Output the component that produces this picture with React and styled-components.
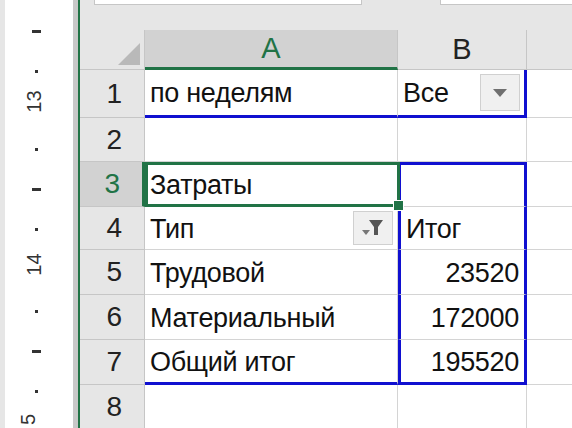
import styled, { createGlobalStyle } from "styled-components";

const Global = createGlobalStyle`
  html, body { margin: 0; padding: 0; overflow: hidden; }
  body { width: 572px; height: 428px; background: #e6e6e6; font-family: "Liberation Sans", Arial, sans-serif; }
`;

const Page = styled.div`
  display: flex;
  width: 572px;
  height: 428px;
  overflow: hidden;
`;

const Ruler = styled.div`
  position: relative;
  width: 68px;
  margin-left: 5px;
  background: #fff;
  flex-shrink: 0;
`;

const Gutter = styled.div`
  width: 5px;
  background: #c8c8c8;
  border-right: 2px solid #217346;
  flex-shrink: 0;
`;

const Mark = styled.div`
  position: absolute;
  left: ${p => (p.dot ? 30 : 27)}px;
  top: ${p => p.y}px;
  width: ${p => (p.dot ? 3 : 9)}px;
  height: 3px;
  background: #333;
`;

const RulerNum = styled.div`
  position: absolute;
  left: 18px;
  top: ${p => p.y}px;
  transform: rotate(-90deg);
  font-size: 20px;
  color: #333;
`;

const Sheet = styled.div`
  flex: 1;
  display: flex;
  flex-direction: column;
  position: relative;
`;

const TopBar = styled.div`
  height: 30px;
  flex-shrink: 0;
  position: relative;
  &::before, &::after {
    content: "";
    position: absolute;
    top: -4px;
    height: 7px;
    background: #fff;
    border: 1px solid #c6c6c6;
  }
  &::before { left: 14px; width: 266px; }
  &::after { left: 360px; width: 200px; }
`;

const Grid = styled.div`
  display: grid;
  grid-template-columns: 65px 253px 129px 60px;
  grid-template-rows: 40px 48px 44px 45px 43px 45px 45px 45px 44px;
  background: #fff;
`;

const Corner = styled.div`
  background: #e6e6e6;
  border-right: 1px solid #c6c6c6;
  border-bottom: 1px solid #c6c6c6;
  position: relative;
  &::after {
    content: "";
    position: absolute;
    right: 4px;
    bottom: 4px;
    border-left: 22px solid transparent;
    border-bottom: 22px solid #b9b9b9;
  }
`;

const ColHead = styled.div`
  background: ${p => (p.sel ? "#d2d2d2" : "#e6e6e6")};
  color: ${p => (p.sel ? "#217346" : "#222")};
  border-right: 1px solid #c6c6c6;
  border-bottom: ${p => (p.sel ? "3px solid #217346" : "1px solid #c6c6c6")};
  display: flex;
  align-items: center;
  justify-content: center;
  font-size: 29px;
`;

const RowHead = styled.div`
  background: ${p => (p.sel ? "#d2d2d2" : "#e6e6e6")};
  color: ${p => (p.sel ? "#217346" : "#222")};
  border-right: ${p => (p.sel ? "3px solid #217346" : "1px solid #c6c6c6")};
  border-bottom: 1px solid #c6c6c6;
  display: flex;
  align-items: center;
  justify-content: flex-end;
  padding-right: 22px;
  font-size: 28px;
`;

const Cell = styled.div`
  position: relative;
  box-sizing: border-box;
  display: flex;
  align-items: center;
  justify-content: ${p => (p.right ? "flex-end" : "flex-start")};
  padding: 2px 5px 0;
  font-size: 27px;
  letter-spacing: -0.3px;
  color: #111;
  white-space: nowrap;
  border-right: ${p => p.br || "1px solid #d4d4d4"};
  border-bottom: ${p => p.bb || "1px solid #d4d4d4"};
  border-left: ${p => p.bl || "none"};
  border-top: ${p => p.bt || "none"};
`;

const DropBtn = styled.div`
  position: absolute;
  right: 4px;
  top: 4px;
  bottom: 4px;
  width: 38px;
  background: #f0f0f0;
  border: 1px solid #d0d0d0;
  display: flex;
  align-items: center;
  justify-content: center;
`;

const Selection = styled.div`
  position: absolute;
  left: 65px;
  top: 162px;
  width: 255px;
  height: 45px;
  box-sizing: border-box;
  border: 3px solid #217346;
  pointer-events: none;
  &::after {
    content: "";
    position: absolute;
    right: -7px;
    bottom: -7px;
    width: 9px;
    height: 9px;
    background: #217346;
    border: 1px solid #fff;
  }
`;

const BLUE = "3px solid #1010d0";

export default function App() {
  return (
    <Page>
      <Global />
      <Ruler>
        <Mark y={30} />
        <Mark dot y={70} />
        <RulerNum y={90}>13</RulerNum>
        <Mark dot y={148} />
        <Mark y={188} />
        <Mark dot y={228} />
        <RulerNum y={253}>14</RulerNum>
        <Mark dot y={310} />
        <Mark y={350} />
        <Mark dot y={390} />
        <RulerNum y={408}>5</RulerNum>
      </Ruler>
      <Gutter />
      <Sheet>
        <TopBar />
        <Grid>
          <Corner />
          <ColHead sel>A</ColHead>
          <ColHead>B</ColHead>
          <ColHead />

          <RowHead>1</RowHead>
          <Cell bb={BLUE}>по неделям</Cell>
          <Cell bb={BLUE} br={BLUE}>
            Все
            <DropBtn>
              <svg width="14" height="8" viewBox="0 0 14 8"><path d="M0 0h14L7 8z" fill="#707070" /></svg>
            </DropBtn>
          </Cell>
          <Cell br="none" />

          <RowHead>2</RowHead>
          <Cell />
          <Cell />
          <Cell br="none" />

          <RowHead sel>3</RowHead>
          <Cell>Затраты</Cell>
          <Cell bt={BLUE} br={BLUE} bl={BLUE} />
          <Cell br="none" />

          <RowHead>4</RowHead>
          <Cell>
            Тип
            <DropBtn>
              <svg width="24" height="20" viewBox="0 0 24 20">
                <path d="M8 2h14l-5 7v8h-4V9z" fill="#555" />
                <path d="M1 12h8l-4 5z" fill="#777" />
              </svg>
            </DropBtn>
          </Cell>
          <Cell br={BLUE} bl={BLUE}>Итог</Cell>
          <Cell br="none" />

          <RowHead>5</RowHead>
          <Cell>Трудовой</Cell>
          <Cell right br={BLUE} bl={BLUE}>23520</Cell>
          <Cell br="none" />

          <RowHead>6</RowHead>
          <Cell>Материальный</Cell>
          <Cell right br={BLUE} bl={BLUE}>172000</Cell>
          <Cell br="none" />

          <RowHead>7</RowHead>
          <Cell bb={BLUE}>Общий итог</Cell>
          <Cell right bb={BLUE} br={BLUE} bl={BLUE}>195520</Cell>
          <Cell br="none" />

          <RowHead>8</RowHead>
          <Cell />
          <Cell />
          <Cell br="none" />
        </Grid>
        <Selection />
      </Sheet>
    </Page>
  );
}
